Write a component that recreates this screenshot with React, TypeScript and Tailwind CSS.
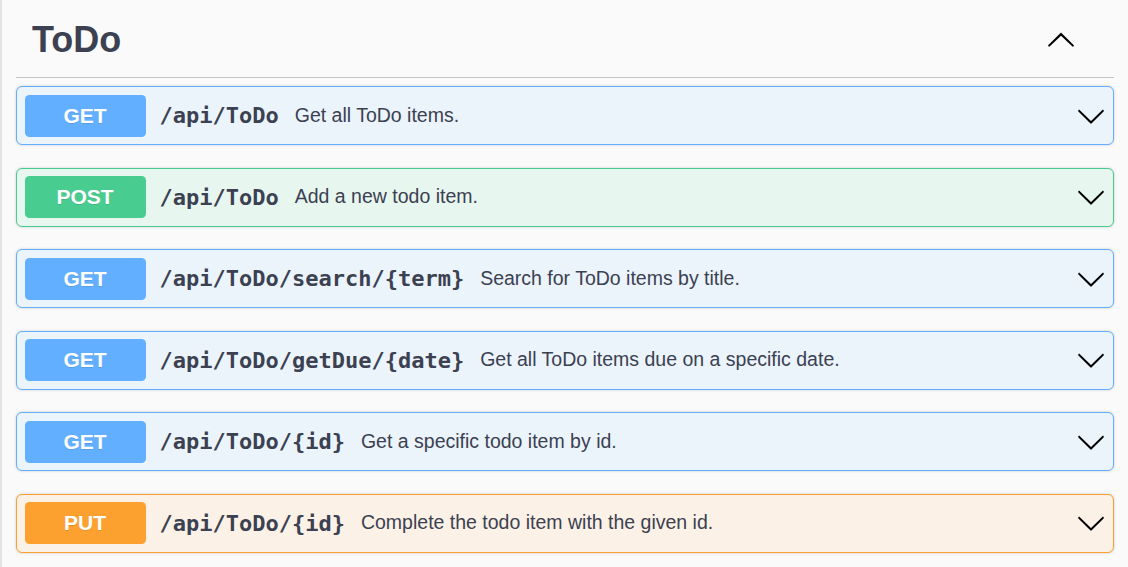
import React from "react";

type Op = {
  method: "GET" | "POST" | "PUT";
  path: string;
  summary: string;
};

const ops: Op[] = [
  { method: "GET", path: "/api/ToDo", summary: "Get all ToDo items." },
  { method: "POST", path: "/api/ToDo", summary: "Add a new todo item." },
  { method: "GET", path: "/api/ToDo/search/{term}", summary: "Search for ToDo items by title." },
  { method: "GET", path: "/api/ToDo/getDue/{date}", summary: "Get all ToDo items due on a specific date." },
  { method: "GET", path: "/api/ToDo/{id}", summary: "Get a specific todo item by id." },
  { method: "PUT", path: "/api/ToDo/{id}", summary: "Complete the todo item with the given id." },
];

const styles = {
  GET: { block: "bg-[#ebf3fb] border-[#61affe]", badge: "bg-[#61affe]" },
  POST: { block: "bg-[#e8f6f0] border-[#49cc90]", badge: "bg-[#49cc90]" },
  PUT: { block: "bg-[#fbf1e6] border-[#fca130]", badge: "bg-[#fca130]" },
};

function ArrowDown() {
  return (
    <svg width="30" height="30" viewBox="0 0 20 20" className="shrink-0">
      <path
        fill="#000"
        d="M17.418 6.109c.272-.268.709-.268.979 0s.271.701 0 .969l-7.908 7.83c-.27.268-.707.268-.979 0l-7.908-7.83c-.27-.268-.27-.701 0-.969.271-.268.709-.268.979 0L10 13.25l7.418-7.141z"
      />
    </svg>
  );
}

function ArrowUp() {
  return (
    <svg width="30" height="30" viewBox="0 0 20 20" className="shrink-0">
      <path
        fill="#000"
        d="M17.418 14.908c.272.268.709.268.979 0s.271-.701 0-.969l-7.908-7.83c-.27-.268-.707-.268-.979 0l-7.908 7.83c-.27.268-.27.701 0 .969.271.268.709.268.979 0L10 7.767l7.418 7.141z"
      />
    </svg>
  );
}

function OpBlock({ op }: { op: Op }) {
  const s = styles[op.method];
  return (
    <div
      className={`flex items-center rounded-[6px] border p-[7.5px] shadow-[0_0_3px_rgba(0,0,0,0.19)] ${s.block}`}
    >
      <span
        className={`flex h-[42px] w-[121px] shrink-0 items-center justify-center rounded-[4.5px] text-[21px] font-bold text-white [text-shadow:0_1px_0_rgba(0,0,0,0.1)] ${s.badge}`}
        style={{ fontFamily: '"Liberation Sans", Arial, sans-serif' }}
      >
        {op.method}
      </span>
      <span
        className="ml-[14px] text-[22px] font-bold text-[#3b4151]"
        style={{ fontFamily: '"DejaVu Sans Mono", monospace' }}
      >
        {op.path}
      </span>
      <span
        className="ml-[16px] flex-1 text-[19.5px] text-[#3b4151]"
        style={{ fontFamily: '"Liberation Sans", Arial, sans-serif' }}
      >
        {op.summary}
      </span>
      <ArrowDown />
    </div>
  );
}

export default function App() {
  return (
    <div className="min-h-screen w-full border-l-2 border-[#e3e3e3] bg-[#fafafa] pl-[14px] pr-[14px]">
      <div className="flex h-[78px] items-center border-b border-[#c4c4c4] pl-[16px] pr-[38px]">
        <h3
          className="mt-[3px] flex-1 text-[36px] font-bold text-[#3b4151]"
          style={{ fontFamily: '"Liberation Sans", Arial, sans-serif' }}
        >
          ToDo
        </h3>
        <ArrowUp />
      </div>
      <div className="flex flex-col gap-[22.5px] pt-[8px]">
        {ops.map((op, i) => (
          <OpBlock key={i} op={op} />
        ))}
      </div>
    </div>
  );
}
